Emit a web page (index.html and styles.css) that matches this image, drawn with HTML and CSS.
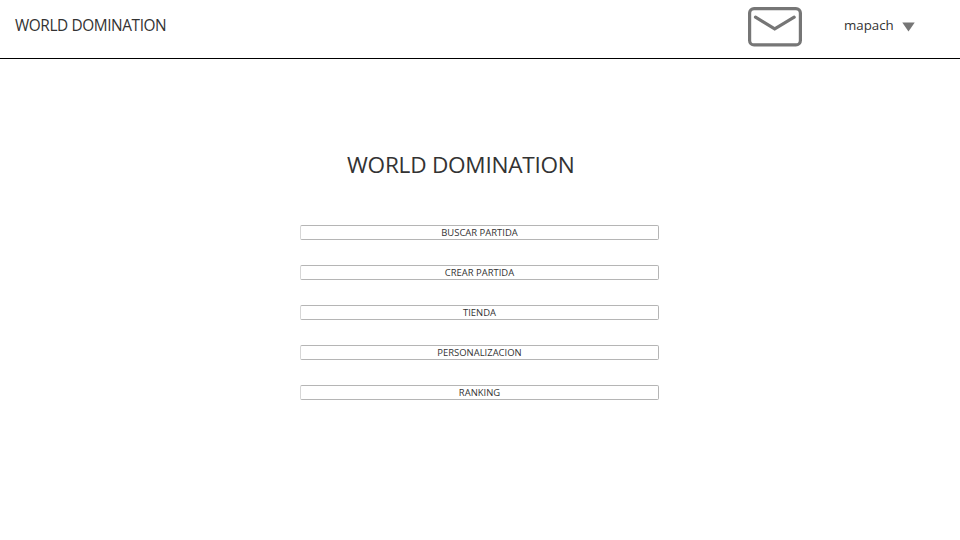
FILE: index.html
```
<!DOCTYPE html>
<html lang="es">
<head>
<meta charset="utf-8">
<title>World Domination</title>
<link rel="stylesheet" href="styles.css">
</head>
<body>
<header class="topbar">
  <span class="brand">WORLD DOMINATION</span>
  <svg class="mail" width="56" height="42" viewBox="0 0 56 42" fill="none" stroke="#767676">
    <rect x="2.6" y="2.6" width="50.8" height="36.3" rx="4.5" stroke-width="3.2"/>
    <path d="M8.5 11.2L27.7 22.9L47.2 11.2" stroke-width="3.2" stroke-linecap="round"/>
  </svg>
  <span class="user">mapach</span>
  <svg class="arrow" width="13" height="10" viewBox="0 0 13 10"><path d="M0.3 0.5H12.7L6.5 9.5Z" fill="#767676"/></svg>
</header>
<main class="main">
  <h1 class="title">WORLD DOMINATION</h1>
  <nav class="menu">
    <button class="item">BUSCAR PARTIDA</button>
    <button class="item">CREAR PARTIDA</button>
    <button class="item">TIENDA</button>
    <button class="item">PERSONALIZACION</button>
    <button class="item">RANKING</button>
  </nav>
</main>
</body>
</html>
```
FILE: styles.css
```
* { box-sizing: border-box; }
body {
  margin: 0;
  background: #fff;
  color: #333;
  font-family: "Segoe UI", "Open Sans", "Noto Sans", sans-serif;
}
.topbar {
  display: flex;
  align-items: flex-start;
  height: 59px;
  padding-left: 15px;
  border-bottom: 1px solid #000;
}
.brand {
  width: 732px;
  padding-top: 15px;
  font-size: 15.4px;
  line-height: 21px;
  letter-spacing: -0.41px;
}
.mail { margin-top: 6px; }
.user {
  width: 58px;
  margin-left: 41px;
  padding-top: 15px;
  font-size: 13.3px;
  line-height: 20px;
}
.arrow { margin-top: 22px; }
.main { padding: 91px 301px 0 300px; }
.title {
  margin: 0 0 45px 47px;
  font-size: 22.6px;
  font-weight: 400;
  line-height: 30px;
  letter-spacing: -0.26px;
  white-space: nowrap;
}
.menu {
  display: flex;
  flex-direction: column;
  gap: 25px;
}
.item {
  height: 15px;
  padding: 0;
  border: 1px solid #b5b5b5;
  border-left-color: #d6d6d6;
  border-radius: 2px;
  background: #fff;
  color: #333;
  font-family: inherit;
  font-size: 9.45px;
  line-height: 13px;
}
```
